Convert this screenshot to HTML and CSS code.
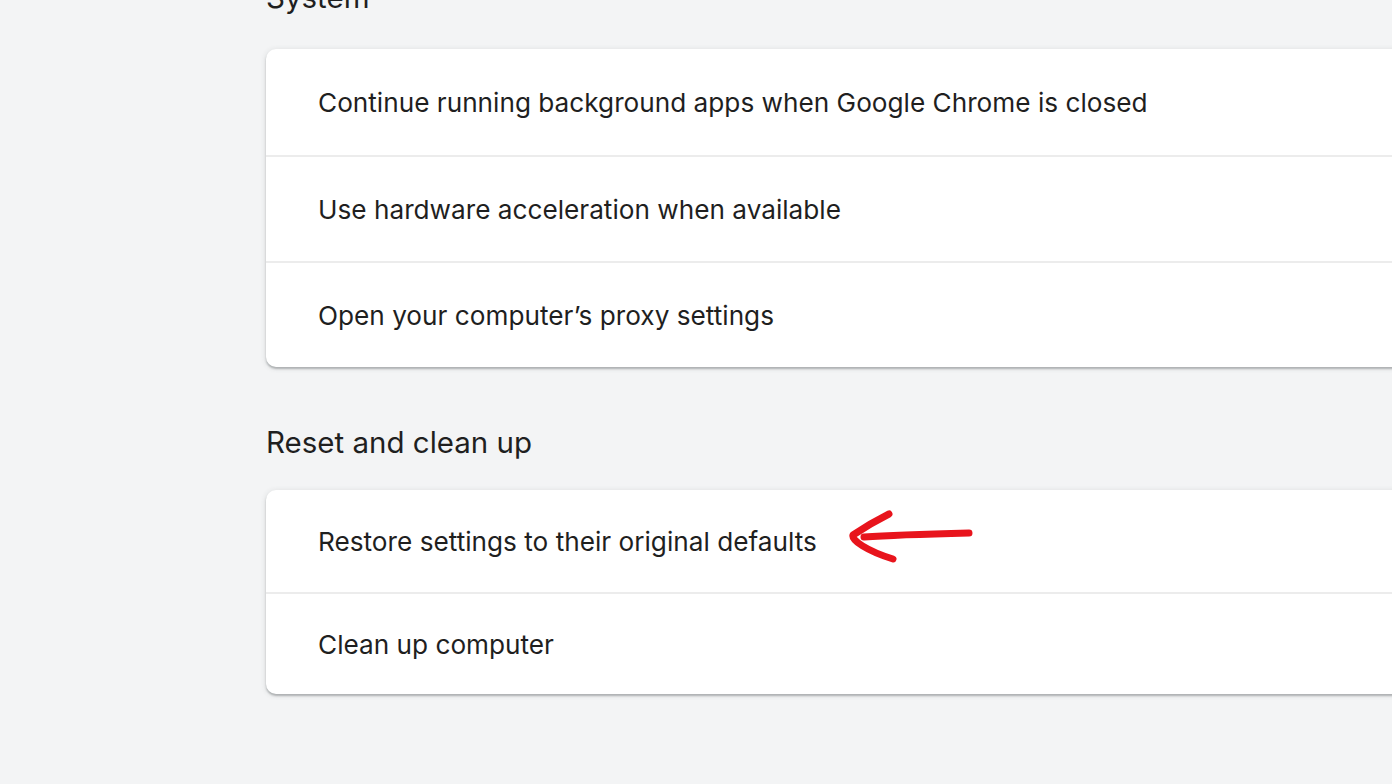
FILE: index.html
```html
<!DOCTYPE html>
<html lang="en">
<head>
<meta charset="utf-8">
<title>Settings – System</title>
<link rel="stylesheet" href="styles.css">
</head>
<body>
<main class="page">
  <h2 class="section-title first">System</h2>
  <section class="card">
    <div class="row tall">Continue running background apps when Google Chrome is closed</div>
    <div class="row tall">Use hardware acceleration when available</div>
    <div class="row tall">Open your computer’s proxy settings</div>
  </section>

  <h2 class="section-title">Reset and clean up</h2>
  <section class="card">
    <div class="row">
      <span>Restore settings to their original defaults</span>
      <svg class="arrow" width="130" height="56" viewBox="0 0 130 56" aria-hidden="true">
        <path d="M17 27 C45 25 80 24 122 23" fill="none" stroke="#e8141c" stroke-width="7" stroke-linecap="round"/>
        <path d="M42 4 C30 10 18 17 6 25 C4 30 20 41 46 49" fill="none" stroke="#e8141c" stroke-width="7" stroke-linecap="round" stroke-linejoin="round"/>
      </svg>
    </div>
    <div class="row">Clean up computer</div>
  </section>
</main>
</body>
</html>
```

FILE: styles.css
```css
html, body {
  margin: 0;
  padding: 0;
}
body {
  background: #f3f4f5;
  font-family: Inter, "Open Sans", sans-serif;
  color: #1f1f1f;
  overflow: hidden;
  height: 784px;
}
.page {
  padding-left: 266px;
  width: 1300px;
}
.section-title {
  font-size: 29.5px;
  font-weight: 400;
  line-height: 36px;
  margin: 57px 0 30px 0;
}
.section-title.first {
  margin-top: -21px;
  margin-bottom: 34px;
}
.card {
  background: #ffffff;
  border-radius: 10px;
  box-shadow: 0 2px 2px rgba(60, 64, 67, 0.32), 0 1px 5px 1px rgba(60, 64, 67, 0.10);
}
.row {
  display: flex;
  align-items: center;
  height: 102px;
  padding-left: 52px;
  font-size: 26.2px;
  box-sizing: border-box;
}
.row.tall {
  height: 106px;
}
.row + .row {
  border-top: 2px solid #ececec;
}
.arrow {
  margin-left: 30px;
  margin-top: -6px;
  flex: none;
}
```
